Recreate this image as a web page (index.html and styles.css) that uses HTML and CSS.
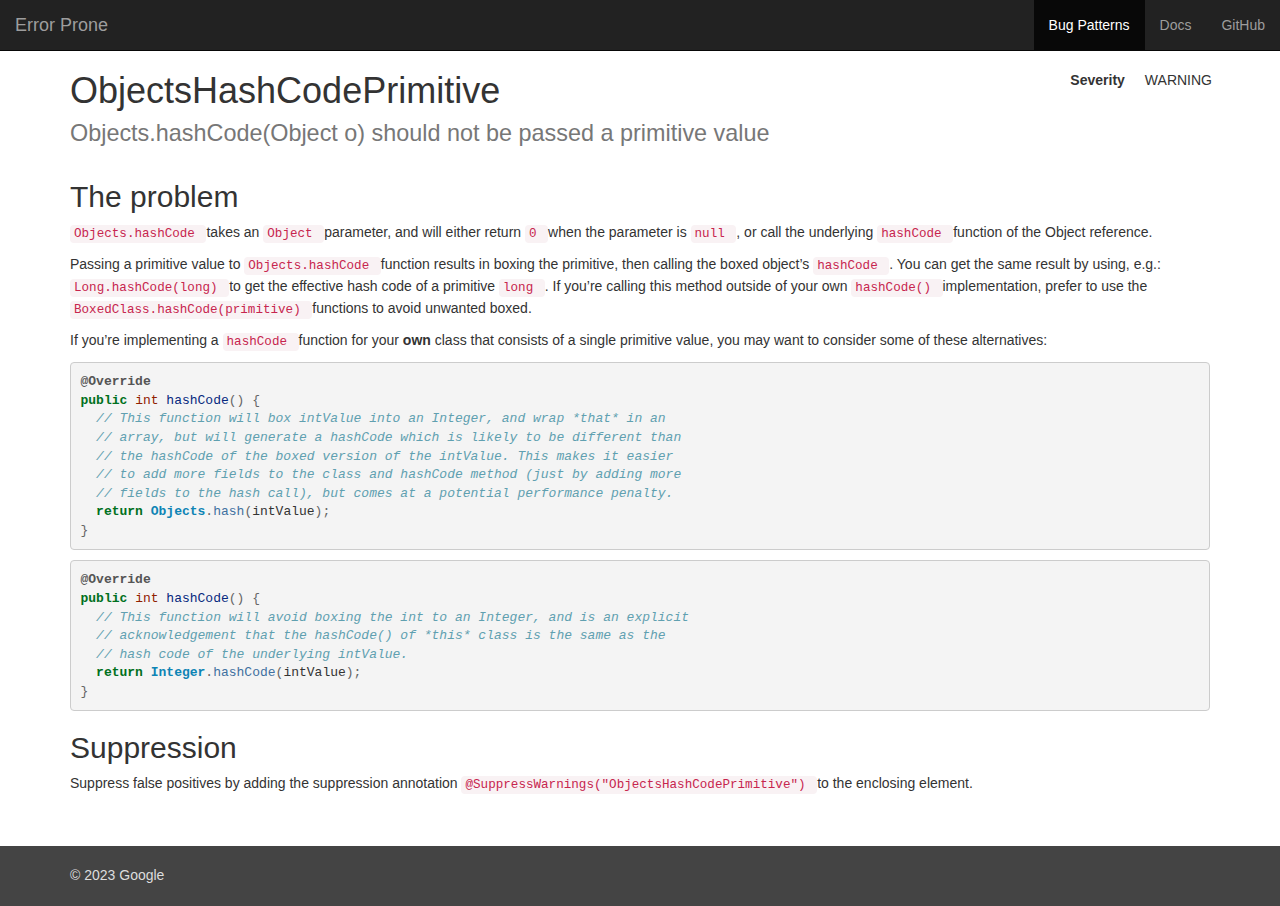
FILE: index.html
```html
<!DOCTYPE html>
<html lang="en">
<head>
<meta charset="utf-8">
<title>ObjectsHashCodePrimitive</title>
<link rel="stylesheet" href="styles.css">
</head>
<body>
<nav class="navbar">
  <a class="brand" href="#">Error Prone</a>
  <ul class="nav">
    <li><a class="active" href="#">Bug Patterns</a></li>
    <li><a href="#">Docs</a></li>
    <li><a href="#">GitHub</a></li>
  </ul>
</nav>

<main class="container">
  <div class="header">
    <div class="titles">
      <h1>ObjectsHashCodePrimitive</h1>
      <p class="subtitle">Objects.hashCode(Object o) should not be passed a primitive value</p>
    </div>
    <table class="meta">
      <tr><td class="label">Severity</td><td>WARNING</td></tr>
    </table>
  </div>

  <h2 class="first">The problem</h2>
  <p><code>Objects.hashCode </code>takes an <code>Object </code>parameter, and will either return <code>0 </code>when the parameter is <code>null </code>, or call the underlying <code>hashCode </code>function of the Object reference.</p>
  <p>Passing a primitive value to <code>Objects.hashCode </code>function results in boxing the primitive, then calling the boxed object’s <code>hashCode </code>. You can get the same result by using, e.g.: <code>Long.hashCode(long) </code>to get the effective hash code of a primitive <code>long </code>. If you’re calling this method outside of your own <code>hashCode() </code>implementation, prefer to use the <code>BoxedClass.hashCode(primitive) </code>functions to avoid unwanted boxed.</p>
  <p class="lead-in">If you’re implementing a <code>hashCode </code>function for your <strong>own</strong> class that consists of a single primitive value, you may want to consider some of these alternatives:</p>

<pre><span class="nd">@Override</span>
<span class="kd">public</span> <span class="kt">int</span> <span class="nf">hashCode</span><span class="p">()</span> <span class="p">{</span>
  <span class="c1">// This function will box intValue into an Integer, and wrap *that* in an</span>
  <span class="c1">// array, but will generate a hashCode which is likely to be different than</span>
  <span class="c1">// the hashCode of the boxed version of the intValue. This makes it easier</span>
  <span class="c1">// to add more fields to the class and hashCode method (just by adding more</span>
  <span class="c1">// fields to the hash call), but comes at a potential performance penalty.</span>
  <span class="k">return</span> <span class="nc">Objects</span><span class="o">.</span><span class="na">hash</span><span class="p">(</span>intValue<span class="p">);</span>
<span class="p">}</span></pre>

<pre class="last"><span class="nd">@Override</span>
<span class="kd">public</span> <span class="kt">int</span> <span class="nf">hashCode</span><span class="p">()</span> <span class="p">{</span>
  <span class="c1">// This function will avoid boxing the int to an Integer, and is an explicit</span>
  <span class="c1">// acknowledgement that the hashCode() of *this* class is the same as the</span>
  <span class="c1">// hash code of the underlying intValue.</span>
  <span class="k">return</span> <span class="nc">Integer</span><span class="o">.</span><span class="na">hashCode</span><span class="p">(</span>intValue<span class="p">);</span>
<span class="p">}</span></pre>

  <h2>Suppression</h2>
  <p>Suppress false positives by adding the suppression annotation <code>@SuppressWarnings("ObjectsHashCodePrimitive") </code>to the enclosing element.</p>
</main>

<footer class="footer">
  <div class="container">
    <p>© 2023 Google</p>
  </div>
</footer>
</body>
</html>
```

FILE: styles.css
```css
* { box-sizing: border-box; }

html, body {
  margin: 0;
  padding: 0;
}

body {
  font-family: "Liberation Sans", Arial, sans-serif;
  font-size: 14px;
  line-height: 1.428571;
  color: #333;
  background: #fff;
}

a { text-decoration: none; }

.navbar {
  height: 51px;
  background: #222;
  border-bottom: 1px solid #080808;
  display: flex;
  justify-content: space-between;
  align-items: stretch;
}

.brand {
  font-size: 18px;
  line-height: 20px;
  padding: 15px;
  color: #9d9d9d;
}

.nav {
  list-style: none;
  margin: 0;
  padding: 0;
  display: flex;
}

.nav a {
  display: block;
  padding: 15px;
  line-height: 20px;
  color: #9d9d9d;
}

.nav a.active {
  background: #080808;
  color: #fff;
}

.container {
  width: 1170px;
  margin: 0 auto;
  padding: 0 15px;
}

.header {
  display: flex;
  justify-content: space-between;
  align-items: flex-start;
}

h1 {
  font-size: 36px;
  font-weight: 500;
  line-height: 1.1;
  margin: 20px 0 10px;
}

.subtitle {
  font-size: 23.4px;
  line-height: 1.1;
  color: #777;
  margin: 0 0 14px;
}

.meta {
  border-collapse: collapse;
  margin-top: 19px;
  margin-right: -2px;
}

.meta td {
  padding: 0;
  line-height: 20px;
}

.meta td.label {
  font-weight: bold;
  padding-right: 20px;
}

h2 {
  font-size: 30px;
  font-weight: 500;
  line-height: 1.1;
  margin: 20px 0 10px;
}

p {
  margin: 0 0 10px;
}

p.lead-in {
  margin-bottom: 9px;
}

code {
  font-family: "Liberation Mono", "Courier New", monospace;
  font-size: 90%;
  line-height: 21px;
  padding: 2px 4px;
  color: #c7254e;
  background: #f9f2f4;
  border-radius: 4px;
}

pre {
  font-family: "Liberation Mono", "Courier New", monospace;
  font-size: 13px;
  line-height: 1.428571;
  color: #333;
  background: #f4f4f4;
  border: 1px solid #ccc;
  border-radius: 4px;
  padding: 10px 9.5px 9px;
  margin: 0 0 10px;
  white-space: pre;
  overflow: auto;
}

pre.last { margin-bottom: 0; }

.nd { color: #555; font-weight: bold; }
.kd, .k { color: #007020; font-weight: bold; }
.kt { color: #902000; }
.nf { color: #06287e; }
.p, .o { color: #666; }
.c1 { color: #60a0b0; font-style: italic; }
.nc { color: #0e84b5; font-weight: bold; }
.na { color: #4070a0; }

.footer {
  margin-top: 50px;
  background: #444;
  color: #ddd;
  height: 60px;
  padding-top: 20px;
}

.footer p { margin: 0; }
```
